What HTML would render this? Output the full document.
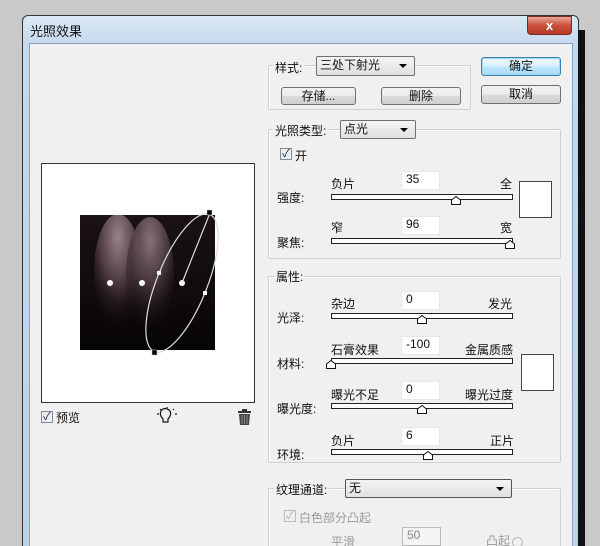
<!DOCTYPE html>
<html><head><meta charset="utf-8"><style>
*{margin:0;padding:0;box-sizing:border-box}
html,body{width:600px;height:546px;overflow:hidden}
body{background:#c9c9c9;position:relative;font-family:"Liberation Sans","Noto Sans CJK SC",sans-serif;font-size:12px;color:#111}
.a{position:absolute}
.win{left:22px;top:15px;width:557px;height:540px;border:1px solid #333;border-radius:6px 6px 0 0;background:linear-gradient(#dbe8f4,#c4d8ec 30px,#bcd3ea);}
.shadow{left:578px;top:30px;width:7px;height:520px;background:#111}
.client{left:29px;top:43px;width:544px;height:510px;background:#f0f0f0;border:1px solid #8aa2bd}
.grp{position:absolute;border:1px solid #cfcfcf;border-radius:2px;box-shadow:1px 1px 0 #fff inset}
.lbl{position:absolute;background:#f0f0f0;padding:0 2px;white-space:nowrap}
.btn{position:absolute;border:1px solid #707070;border-radius:3px;background:linear-gradient(#f2f2f2,#ebebeb 50%,#dcdcdc 51%,#cfcfcf);text-align:center;line-height:16px;font-size:12px}
.dd{position:absolute;border:1px solid #707070;border-radius:2px;background:linear-gradient(#f4f4f4,#e0e0e0);line-height:17px;padding-left:3px;font-size:12px}
.dd:after{content:"";position:absolute;right:7px;top:7px;border:4px solid transparent;border-top:4px solid #000;border-bottom:0}
.inp{position:absolute;width:39px;height:19px;background:#fff;border:1px solid #e8e8e8;padding-left:4px;font-size:12px;line-height:15px}
.trk{position:absolute;left:331px;width:182px;height:6px;border:1.5px solid #222;background:#fff}
.th{position:absolute;width:10px;height:9px}
.sw{position:absolute;width:33px;height:37px;background:#fff;border:1px solid #444}
.cb{position:absolute;width:12px;height:12px;border:1px solid #8a8a8a;background:#e6eef8;font-size:11px;line-height:10px;text-align:center;color:#224}
</style></head><body>
<div class="a win"></div>
<div class="a shadow"></div>
<div class="a" style="left:527px;top:16px;width:45px;height:19px;border:1px solid #7a2a20;border-radius:0 0 4px 4px;background:linear-gradient(#e9a79a,#c9503c 50%,#b83a28);color:#fff;font-weight:bold;text-align:center;line-height:17px;font-size:13px">x</div>
<div class="a" style="left:30px;top:21px;font-size:13px;color:#111">光照效果</div>
<div class="a client"></div>

<div class="a" style="left:41px;top:163px;width:214px;height:240px;background:#fff;border:1px solid #333"></div>
<svg class="a" style="left:0;top:0" width="600" height="546">
<defs>
<radialGradient id="b1" cx="0.5" cy="0.2" r="0.8"><stop offset="0" stop-color="#9a8288"/><stop offset="0.5" stop-color="#4a383c"/><stop offset="1" stop-color="#0a0608" stop-opacity="0"/></radialGradient>
<linearGradient id="bg" x1="0" y1="0" x2="0" y2="1"><stop offset="0" stop-color="#1a1214"/><stop offset="0.5" stop-color="#120c0d"/><stop offset="1" stop-color="#060404"/></linearGradient>
<clipPath id="c"><rect x="80" y="215" width="135" height="135"/></clipPath>
</defs>
<rect x="80" y="215" width="135" height="135" fill="url(#bg)"/>
<g clip-path="url(#c)">
<ellipse cx="118" cy="272" rx="24" ry="58" fill="url(#b1)"/>
<ellipse cx="150" cy="275" rx="24" ry="58" fill="url(#b1)" opacity="0.85"/>
</g>
<circle cx="110" cy="283" r="3" fill="#fff"/><circle cx="142" cy="283" r="3" fill="#fff"/><circle cx="182" cy="283" r="3" fill="#fff"/>
<ellipse cx="182" cy="283" rx="25" ry="74" transform="rotate(22 182 283)" fill="none" stroke="#ddd" stroke-width="1.2"/>
<line x1="182" y1="283" x2="210" y2="213" stroke="#ddd" stroke-width="1.2"/>
<rect x="207" y="210" width="5" height="5" fill="#000" stroke="#ccc" stroke-width=".5"/>
<rect x="152" y="350" width="5" height="5" fill="#000" stroke="#ccc" stroke-width=".5"/>
<rect x="157" y="271" width="4" height="4" fill="#fff"/><rect x="203" y="291" width="4" height="4" fill="#fff"/>
<g stroke="#111" fill="none" stroke-width="1.2"><path d="M163 419 q-4 -4 -2 -8 q4 -5 9 0 q2 4 -2 8 v3 h-5 z"/><line x1="157" y1="414" x2="159" y2="414"/><line x1="175" y1="414" x2="177" y2="414"/><line x1="167" y1="407" x2="167" y2="408"/><line x1="160" y1="409" x2="161" y2="410"/><line x1="173" y1="410" x2="174" y2="409"/></g>
<rect x="238" y="411" width="13" height="2" fill="#333"/><rect x="242" y="409" width="5" height="2" fill="#333"/>
<path d="M239 414 h11 l-1 11 h-9 z" fill="#444"/>
<g stroke="#aaa" stroke-width=".7"><line x1="242" y1="415" x2="242" y2="424"/><line x1="244.5" y1="415" x2="244.5" y2="424"/><line x1="247" y1="415" x2="247" y2="424"/></g>
</svg>
<div class="cb" style="left:41px;top:411px">✓</div>
<div class="a" style="left:56px;top:409px">预览</div>

<div class="grp" style="left:268px;top:65px;width:203px;height:45px"></div>
<div class="lbl" style="left:273px;top:59px">样式:</div>
<div class="dd" style="left:316px;top:56px;width:99px;height:20px">三处下射光</div>
<div class="btn" style="left:281px;top:87px;width:75px;height:18px">存储...</div>
<div class="btn" style="left:381px;top:87px;width:80px;height:18px">删除</div>
<div class="btn" style="left:481px;top:57px;width:80px;height:19px;border-color:#3c7fb1;background:linear-gradient(#eaf6fd,#d9f0fc 50%,#bee6fd 51%,#a7d9f5);box-shadow:0 0 0 1px #9fd8f6 inset">确定</div>
<div class="btn" style="left:481px;top:85px;width:80px;height:19px">取消</div>

<div class="grp" style="left:268px;top:129px;width:293px;height:130px"></div>
<div class="lbl" style="left:273px;top:122px">光照类型:</div>
<div class="dd" style="left:340px;top:120px;width:76px;height:19px">点光</div>
<div class="cb" style="left:280px;top:148px">✓</div>
<div class="a" style="left:295px;top:147px">开</div>

<div class="a" style="left:277px;top:189px">强度:</div>
<div class="a" style="left:331px;top:175px">负片</div>
<div class="inp" style="left:401px;top:171px">35</div>
<div class="a" style="left:500px;top:175px">全</div>
<div class="trk" style="top:194px"></div>
<svg class="th" style="left:451px;top:196px"><path d="M0.5 8.5 V4 L5 0.5 L9.5 4 V8.5 Z" fill="#fff" stroke="#111"/></svg>
<div class="sw" style="left:519px;top:181px"></div>

<div class="a" style="left:277px;top:234px">聚焦:</div>
<div class="a" style="left:331px;top:219px">窄</div>
<div class="inp" style="left:401px;top:216px">96</div>
<div class="a" style="left:500px;top:219px">宽</div>
<div class="trk" style="top:238px"></div>
<svg class="th" style="left:505px;top:240px"><path d="M0.5 8.5 V4 L5 0.5 L9.5 4 V8.5 Z" fill="#fff" stroke="#111"/></svg>

<div class="grp" style="left:268px;top:276px;width:293px;height:187px"></div>
<div class="lbl" style="left:274px;top:268px">属性:</div>

<div class="a" style="left:277px;top:309px">光泽:</div>
<div class="a" style="left:331px;top:295px">杂边</div>
<div class="inp" style="left:401px;top:291px">0</div>
<div class="a" style="left:488px;top:295px">发光</div>
<div class="trk" style="top:313px"></div>
<svg class="th" style="left:417px;top:315px"><path d="M0.5 8.5 V4 L5 0.5 L9.5 4 V8.5 Z" fill="#fff" stroke="#111"/></svg>

<div class="a" style="left:277px;top:355px">材料:</div>
<div class="a" style="left:331px;top:341px">石膏效果</div>
<div class="inp" style="left:401px;top:336px">-100</div>
<div class="a" style="left:465px;top:341px">金属质感</div>
<div class="trk" style="top:358px"></div>
<svg class="th" style="left:326px;top:360px"><path d="M0.5 8.5 V4 L5 0.5 L9.5 4 V8.5 Z" fill="#fff" stroke="#111"/></svg>
<div class="sw" style="left:521px;top:354px;height:37px"></div>

<div class="a" style="left:277px;top:400px">曝光度:</div>
<div class="a" style="left:331px;top:386px">曝光不足</div>
<div class="inp" style="left:401px;top:381px">0</div>
<div class="a" style="left:465px;top:386px">曝光过度</div>
<div class="trk" style="top:403px"></div>
<svg class="th" style="left:417px;top:405px"><path d="M0.5 8.5 V4 L5 0.5 L9.5 4 V8.5 Z" fill="#fff" stroke="#111"/></svg>

<div class="a" style="left:277px;top:446px">环境:</div>
<div class="a" style="left:331px;top:432px">负片</div>
<div class="inp" style="left:401px;top:427px">6</div>
<div class="a" style="left:490px;top:432px">正片</div>
<div class="trk" style="top:449px"></div>
<svg class="th" style="left:423px;top:451px"><path d="M0.5 8.5 V4 L5 0.5 L9.5 4 V8.5 Z" fill="#fff" stroke="#111"/></svg>

<div class="grp" style="left:268px;top:488px;width:293px;height:70px"></div>
<div class="lbl" style="left:274px;top:481px">纹理通道:</div>
<div class="dd" style="left:345px;top:479px;width:167px;height:19px;border-color:#555">无</div>
<div class="cb" style="left:284px;top:510px;border-color:#bbb;background:#f0f0f0;color:#aaa">✓</div>
<div class="a" style="left:299px;top:509px;color:#9a9a9a">白色部分凸起</div>
<div class="a" style="left:331px;top:533px;color:#9a9a9a">平滑</div>
<div class="inp" style="left:402px;top:527px;border-color:#bbb;background:#f4f4f4;color:#888">50</div>
<div class="a" style="left:486px;top:532px;color:#9a9a9a">凸起</div>
<div class="a" style="left:512px;top:537px;width:11px;height:11px;border:1px solid #bbb;border-radius:50%"></div>
</body></html>
